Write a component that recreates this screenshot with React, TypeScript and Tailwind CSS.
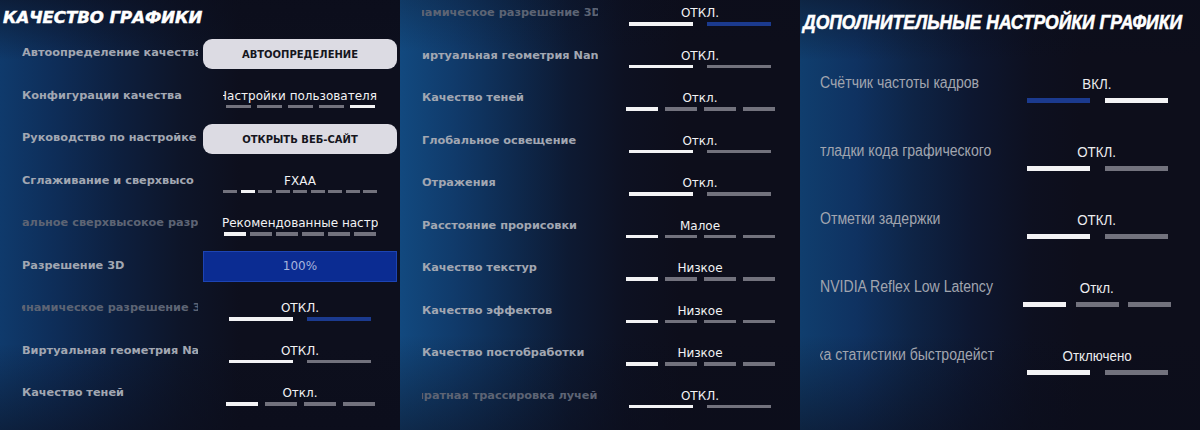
import React from "react";

type Seg = "w" | "g" | "b";

const segColor: Record<Seg, string> = {
  w: "bg-[#f3f3f5]",
  g: "bg-[#72727d]",
  b: "bg-[#1b3a8e]",
};

const SANS = "font-['DejaVu_Sans',sans-serif]";
const ARIAL = "font-['Liberation_Sans',Arial,sans-serif]";

function Bars({ segs, segW, gap, h = "h-[3.5px]" }: { segs: Seg[]; segW: string; gap: string; h?: string }) {
  return (
    <div className={`flex ${gap}`}>
      {segs.map((s, i) => (
        <div key={i} className={`${segW} ${h} ${segColor[s]}`} />
      ))}
    </div>
  );
}

const two = (a: Seg, b: Seg) => <Bars segs={[a, b]} segW="w-[64px]" gap="gap-[14px]" />;
const four = (i: number) => (
  <Bars segs={[0, 1, 2, 3].map((k) => (k === i ? "w" : "g")) as Seg[]} segW="w-[32px]" gap="gap-[7px]" />
);

function Row({ label, dim, shift, children }: { label: string; dim?: boolean; shift?: string; children: React.ReactNode }) {
  return (
    <div className="flex h-[42.5px] shrink-0 items-center">
      <div
        className={`ml-[22px] w-[176px] overflow-hidden whitespace-nowrap ${SANS} text-[11.3px] font-bold leading-[16px] ${
          dim ? "text-[#5d6474]" : "text-[#a2a7b2]"
        }`}
      >
        <span className={`inline-block ${shift ?? ""}`}>{label}</span>
      </div>
      <div className="ml-[5px] flex w-[194px] justify-center">{children}</div>
    </div>
  );
}

function Val({ text, bars, box, align }: { text: string; bars: React.ReactNode; box?: string; align?: string }) {
  return (
    <div className="flex flex-col items-center pt-[5px]">
      <div className={`flex ${box ?? "w-[194px]"} overflow-hidden ${align ?? "justify-center"}`}>
        <span className={`shrink-0 whitespace-nowrap ${SANS} text-[12px] leading-[16px] text-[#f2f2f4]`}>{text}</span>
      </div>
      <div className="mt-[1px]">{bars}</div>
    </div>
  );
}

function Btn({ children }: { children: React.ReactNode }) {
  return (
    <div
      className={`mt-[2px] flex h-[30px] w-[194px] items-center justify-center rounded-[9px] bg-[#dcdbe3] ${SANS} text-[10px] font-bold text-[#15151d]`}
    >
      {children}
    </div>
  );
}

function RRow({ label, shift, children }: { label: string; shift?: string; children: React.ReactNode }) {
  return (
    <div className="flex h-[68px] shrink-0 items-center">
      <div className={`ml-[20px] w-[177px] overflow-hidden whitespace-nowrap ${ARIAL} text-[16px] leading-[20px] text-[#a1a5af]`}>
        <span className={`inline-block origin-left scale-x-[0.88] ${shift ?? ""}`}>{label}</span>
      </div>
      <div className="flex w-[200px] justify-center">{children}</div>
    </div>
  );
}

function RVal({ text, bars }: { text: string; bars: React.ReactNode }) {
  return (
    <div className="flex flex-col items-center pt-[10.5px]">
      <span className={`inline-block scale-x-[0.86] whitespace-nowrap ${ARIAL} text-[15.5px] leading-[20px] text-[#ececef]`}>
        {text}
      </span>
      <div className="mt-[3.5px]">{bars}</div>
    </div>
  );
}

const rTwo = (a: Seg, b: Seg) => <Bars segs={[a, b]} segW="w-[63px]" gap="gap-[15px]" h="h-[5px]" />;

export default function App() {
  return (
    <div className="flex h-[430px] w-[1200px] overflow-hidden bg-[#0d0e1b]">
      {/* LEFT PANEL */}
      <div className="relative flex h-[430px] w-[400px] shrink-0 flex-col overflow-hidden bg-[linear-gradient(180deg,rgba(11,13,27,0.6)_0%,rgba(11,13,27,0)_14%,rgba(11,13,27,0)_80%,rgba(11,13,27,0.55)_100%),linear-gradient(90deg,#0f3a6c_0%,#0e2d58_14%,#0d1f3e_30%,#0d1529_45%,#0d0f1d_60%)]">
        <div className="h-[31.75px] shrink-0 pl-[3px] pt-[8px]">
          <div
            className={`whitespace-nowrap ${SANS} text-[16.5px] font-bold italic leading-[20px] text-white [-webkit-text-stroke:0.5px_#ffffff]`}
          >
            КАЧЕСТВО ГРАФИКИ
          </div>
        </div>
        <Row label="Автоопределение качества">
          <Btn>АВТООПРЕДЕЛЕНИЕ</Btn>
        </Row>
        <Row label="Конфигурации качества">
          <Val
            text="Настройки пользователя"
            box="w-[154px]"
            align="justify-end"
            bars={<Bars segs={["g", "g", "g", "g", "w"]} segW="w-[25px]" gap="gap-[6px]" />}
          />
        </Row>
        <Row label="Руководство по настройке">
          <Btn>ОТКРЫТЬ ВЕБ-САЙТ</Btn>
        </Row>
        <Row label="Сглаживание и сверхвысо">
          <Val
            text="FXAA"
            bars={<Bars segs={["g", "w", "g", "g", "g", "g", "g", "g", "g"]} segW="w-[14px]" gap="gap-[3.5px]" />}
          />
        </Row>
        <Row label="альное сверхвысокое разр" dim>
          <Val
            text="Рекомендованные настр"
            box="w-[156px]"
            align="justify-start"
            bars={<Bars segs={["w", "g", "g", "g", "g", "g"]} segW="w-[22px]" gap="gap-[4px]" />}
          />
        </Row>
        <Row label="Разрешение 3D">
          <div
            className={`mt-[1px] flex h-[31px] w-[194px] items-center justify-center border border-[#1d44b3] bg-[#0b2c92] ${SANS} text-[12px] text-[#a8b5dd]`}
          >
            100%
          </div>
        </Row>
        <Row label="инамическое разрешение 3" dim shift="-ml-[4px]">
          <Val text="ОТКЛ." bars={two("w", "b")} />
        </Row>
        <Row label="Виртуальная геометрия Na">
          <Val text="ОТКЛ." bars={two("w", "g")} />
        </Row>
        <Row label="Качество теней">
          <Val text="Откл." bars={four(0)} />
        </Row>
      </div>

      {/* MIDDLE PANEL */}
      <div className="relative flex h-[430px] w-[400px] shrink-0 flex-col overflow-hidden bg-[linear-gradient(180deg,rgba(11,13,27,0.25)_0%,rgba(11,13,27,0)_12%,rgba(11,13,27,0)_78%,rgba(11,13,27,0.5)_100%),linear-gradient(90deg,#12497f_0%,#103a6a_14%,#0e2a4f_28%,#0d1a33_42%,#0d1122_56%,#0d0e1b_70%)]">
        <div className="-mt-[8.25px]" />
        <Row label="намическое разрешение 3D" dim shift="-ml-[5px]">
          <Val text="ОТКЛ." bars={two("w", "b")} />
        </Row>
        <Row label="иртуальная геометрия Nanit">
          <Val text="ОТКЛ." bars={two("w", "g")} />
        </Row>
        <Row label="Качество теней">
          <Val text="Откл." bars={four(0)} />
        </Row>
        <Row label="Глобальное освещение">
          <Val text="Откл." bars={two("w", "g")} />
        </Row>
        <Row label="Отражения">
          <Val text="Откл." bars={two("w", "g")} />
        </Row>
        <Row label="Расстояние прорисовки">
          <Val text="Малое" bars={four(0)} />
        </Row>
        <Row label="Качество текстур">
          <Val text="Низкое" bars={four(0)} />
        </Row>
        <Row label="Качество эффектов">
          <Val text="Низкое" bars={four(0)} />
        </Row>
        <Row label="Качество постобработки">
          <Val text="Низкое" bars={four(0)} />
        </Row>
        <Row label="пратная трассировка лучей" dim shift="-ml-[6px]">
          <Val text="ОТКЛ." bars={two("w", "g")} />
        </Row>
      </div>

      {/* RIGHT PANEL */}
      <div className="relative flex h-[430px] w-[400px] shrink-0 flex-col overflow-hidden bg-[linear-gradient(180deg,rgba(11,13,27,0.5)_0%,rgba(11,13,27,0)_14%,rgba(11,13,27,0)_78%,rgba(11,13,27,0.55)_100%),linear-gradient(90deg,#103e6e_0%,#0f3261_14%,#0e2446_28%,#0d1730_43%,#0d1020_58%,#0d0e1b_70%)]">
        <div className="h-[49px] shrink-0 overflow-hidden pl-[3px] pt-[8px]">
          <div
            className={`inline-block origin-left scale-x-[0.834] whitespace-nowrap ${ARIAL} text-[21px] font-bold italic leading-[28px] text-white [-webkit-text-stroke:0.6px_#ffffff]`}
          >
            ДОПОЛНИТЕЛЬНЫЕ НАСТРОЙКИ ГРАФИКИ
          </div>
        </div>
        <RRow label="Счётчик частоты кадров">
          <RVal text="ВКЛ." bars={rTwo("b", "w")} />
        </RRow>
        <RRow label="тладки кода графического">
          <RVal text="ОТКЛ." bars={rTwo("w", "g")} />
        </RRow>
        <RRow label="Отметки задержки">
          <RVal text="ОТКЛ." bars={rTwo("w", "g")} />
        </RRow>
        <RRow label="NVIDIA Reflex Low Latency">
          <RVal text="Откл." bars={<Bars segs={["w", "g", "g"]} segW="w-[43px]" gap="gap-[9.5px]" h="h-[5px]" />} />
        </RRow>
        <RRow label="ка статистики быстродейст" shift="-ml-[3px]">
          <RVal text="Отключено" bars={rTwo("w", "g")} />
        </RRow>
      </div>
    </div>
  );
}
